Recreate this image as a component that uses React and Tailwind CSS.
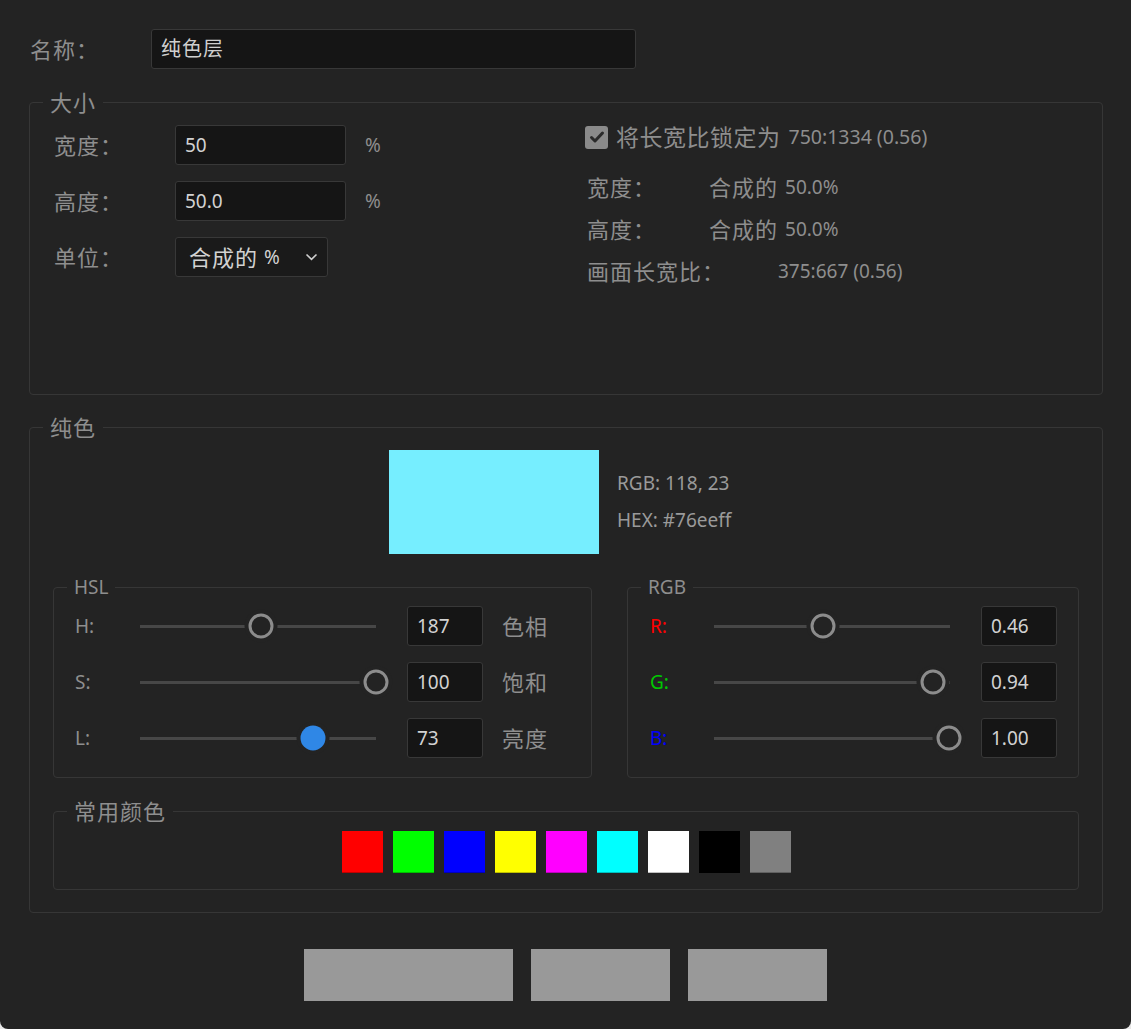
import React from 'react';

const cjk = 'text-[22px] tracking-[1px] leading-none';

const Box = ({ legend, legendClass = 'text-[22px] tracking-[1px]', className = '', children }) => (
  <fieldset className={`border border-[#363636] rounded-[4px] px-[13px] ${className}`}>
    <legend className={`px-[7px] h-[30px] leading-[30px] text-[#8e8e8e] ${legendClass}`}>{legend}</legend>
    {children}
  </fieldset>
);

const Field = ({ value, className = '' }) => (
  <div className={`h-[40px] flex items-center bg-[#151515] border border-[#383838] rounded-[3px] px-[9px] text-[19px] text-[#d2d2d2] ${className}`}>
    {value}
  </div>
);

const Slider = ({ pct, active }) => (
  <div className="relative w-[236px] h-[3px] bg-[#474747]">
    <div
      className={`absolute top-1/2 w-[25px] h-[25px] -translate-x-1/2 -translate-y-1/2 rounded-full ring-4 ring-[#232323] ${
        active ? 'bg-[#2f87e6]' : 'bg-[#232323] border-[3px] border-[#8c8c8c]'
      }`}
      style={{ left: `${pct * 100}%` }}
    />
  </div>
);

const hsl = [
  { k: 'H:', pct: 0.513, v: '187', name: '色相' },
  { k: 'S:', pct: 1, v: '100', name: '饱和' },
  { k: 'L:', pct: 0.733, v: '73', name: '亮度', active: true },
];

const rgb = [
  { k: 'R:', pct: 0.462, v: '0.46', color: 'text-[#ff0000]' },
  { k: 'G:', pct: 0.928, v: '0.94', color: 'text-[#00c800]' },
  { k: 'B:', pct: 0.996, v: '1.00', color: 'text-[#0000ff]' },
];

const swatches = ['#ff0000', '#00ff00', '#0000ff', '#ffff00', '#ff00ff', '#00ffff', '#ffffff', '#000000', '#808080'];

export default function App() {
  return (
    <div className="bg-[#e8e8e8]">
      <div className="w-[1131px] h-[1029px] bg-[#232323] rounded-b-[8px] pl-[29px] pr-[28px] pt-[29px] font-['Noto_Sans','Noto_Sans_CJK_SC',sans-serif] text-[#8e8e8e]">
        {/* name */}
        <div className="flex items-center">
          <div className={`w-[122px] pl-[1px] ${cjk}`}>名称：</div>
          <div className="w-[485px] h-[40px] flex items-center bg-[#151515] border border-[#383838] rounded-[3px] px-[9px] text-[20px] tracking-[1px] text-[#cfcfcf]">
            纯色层
          </div>
        </div>

        {/* size */}
        <Box legend="大小" className="mt-[18px]">
          <div className="h-[277px] pt-[8px] pl-[11px] flex">
            <div className="w-[531px] flex flex-col gap-[16px]">
              <div className="flex items-center">
                <div className={`w-[121px] ${cjk}`}>宽度：</div>
                <Field value="50" className="w-[171px]" />
                <span className="ml-[19px] text-[19px]">%</span>
              </div>
              <div className="flex items-center">
                <div className={`w-[121px] ${cjk}`}>高度：</div>
                <Field value="50.0" className="w-[171px]" />
                <span className="ml-[19px] text-[19px]">%</span>
              </div>
              <div className="flex items-center">
                <div className={`w-[121px] ${cjk}`}>单位：</div>
                <div className="w-[153px] h-[40px] flex items-center justify-between bg-[#1a1a1a] border border-[#383838] rounded-[3px] pl-[13px] pr-[9px] text-[#d2d2d2]">
                  <span className="flex items-center">
                    <span className={cjk}>合成的</span>
                    <span className="ml-[6px] text-[19px] leading-none">%</span>
                  </span>
                  <svg width="13" height="8" viewBox="0 0 13 8" fill="none" stroke="#cfcfcf" strokeWidth="1.6">
                    <path d="M1.5 1.5 L6.5 6.3 L11.5 1.5" />
                  </svg>
                </div>
              </div>
            </div>

            <div className="flex flex-col">
              <div className="flex items-center h-[24px]">
                <div className="w-[23px] h-[23px] rounded-[3px] bg-[#8a8a8a] flex items-center justify-center">
                  <svg width="16" height="14" viewBox="0 0 16 14" fill="none" stroke="#2a2a2a" strokeWidth="3" strokeLinecap="round" strokeLinejoin="round">
                    <path d="M2.5 7.5 L6 11 L13.5 3" />
                  </svg>
                </div>
                <span className="ml-[8px] text-[23px] tracking-[0.5px] leading-none">将长宽比锁定为</span>
                <span className="ml-[8px] text-[19.5px] leading-none">750:1334 (0.56)</span>
              </div>
              <div className="mt-[26px] flex items-center h-[24px] pl-[2px]">
                <span className={`w-[122px] ${cjk}`}>宽度：</span>
                <span className={cjk}>合成的</span>
                <span className="ml-[7px] text-[19px] leading-none">50.0%</span>
              </div>
              <div className="mt-[18px] flex items-center h-[24px] pl-[2px]">
                <span className={`w-[122px] ${cjk}`}>高度：</span>
                <span className={cjk}>合成的</span>
                <span className="ml-[7px] text-[19px] leading-none">50.0%</span>
              </div>
              <div className="mt-[18px] flex items-center h-[24px] pl-[2px]">
                <span className={`w-[191px] ${cjk}`}>画面长宽比：</span>
                <span className="text-[19px] leading-none">375:667 (0.56)</span>
              </div>
            </div>
          </div>
        </Box>

        {/* solid color */}
        <Box legend="纯色" className="mt-[17px] pb-[22px]">
          <div className="mx-[10px] pt-[8px]">
            <div className="flex justify-center items-center gap-[18px]">
              <div className="w-[210px] h-[104px] bg-[#76eeff]" />
              <div className="w-[126px] flex flex-col gap-[18px] text-[19px] leading-none text-[#9a9a9a]">
                <span>RGB: 118, 23</span>
                <span>HEX: #76eeff</span>
              </div>
            </div>

            <div className="mt-[18px] flex gap-[35px]">
              <Box legend="HSL" legendClass="text-[19px]" className="w-[539px] pb-[19px]">
                <div className="pt-[4px] pl-[8px] flex flex-col gap-[16px]">
                  {hsl.map((r) => (
                    <div key={r.k} className="flex items-center h-[40px]">
                      <span className="w-[65px] text-[19px] leading-none">{r.k}</span>
                      <Slider pct={r.pct} active={r.active} />
                      <Field value={r.v} className="ml-[31px] w-[76px]" />
                      <span className={`ml-[19px] ${cjk}`}>{r.name}</span>
                    </div>
                  ))}
                </div>
              </Box>
              <Box legend="RGB" legendClass="text-[19px]" className="flex-1 pb-[19px]">
                <div className="pt-[4px] pl-[9px] flex flex-col gap-[16px]">
                  {rgb.map((r) => (
                    <div key={r.k} className="flex items-center h-[40px]">
                      <span className={`w-[64px] text-[19px] leading-none ${r.color}`}>{r.k}</span>
                      <Slider pct={r.pct} />
                      <Field value={r.v} className="ml-[31px] w-[76px]" />
                    </div>
                  ))}
                </div>
              </Box>
            </div>

            <Box legend="常用颜色" className="mt-[18px] pb-[16px]">
              <div className="pt-[5px] flex justify-center gap-[10px]">
                {swatches.map((c) => (
                  <div key={c} className="w-[41px] h-[42px] border-b border-black/25" style={{ backgroundColor: c }} />
                ))}
              </div>
            </Box>
          </div>
        </Box>

        {/* buttons */}
        <div className="mt-[36px] flex justify-center gap-[18px] pr-[1px]">
          <button className="w-[209px] h-[52px] bg-[#999999]" />
          <button className="w-[139px] h-[52px] bg-[#999999]" />
          <button className="w-[139px] h-[52px] bg-[#999999]" />
        </div>
      </div>
    </div>
  );
}
